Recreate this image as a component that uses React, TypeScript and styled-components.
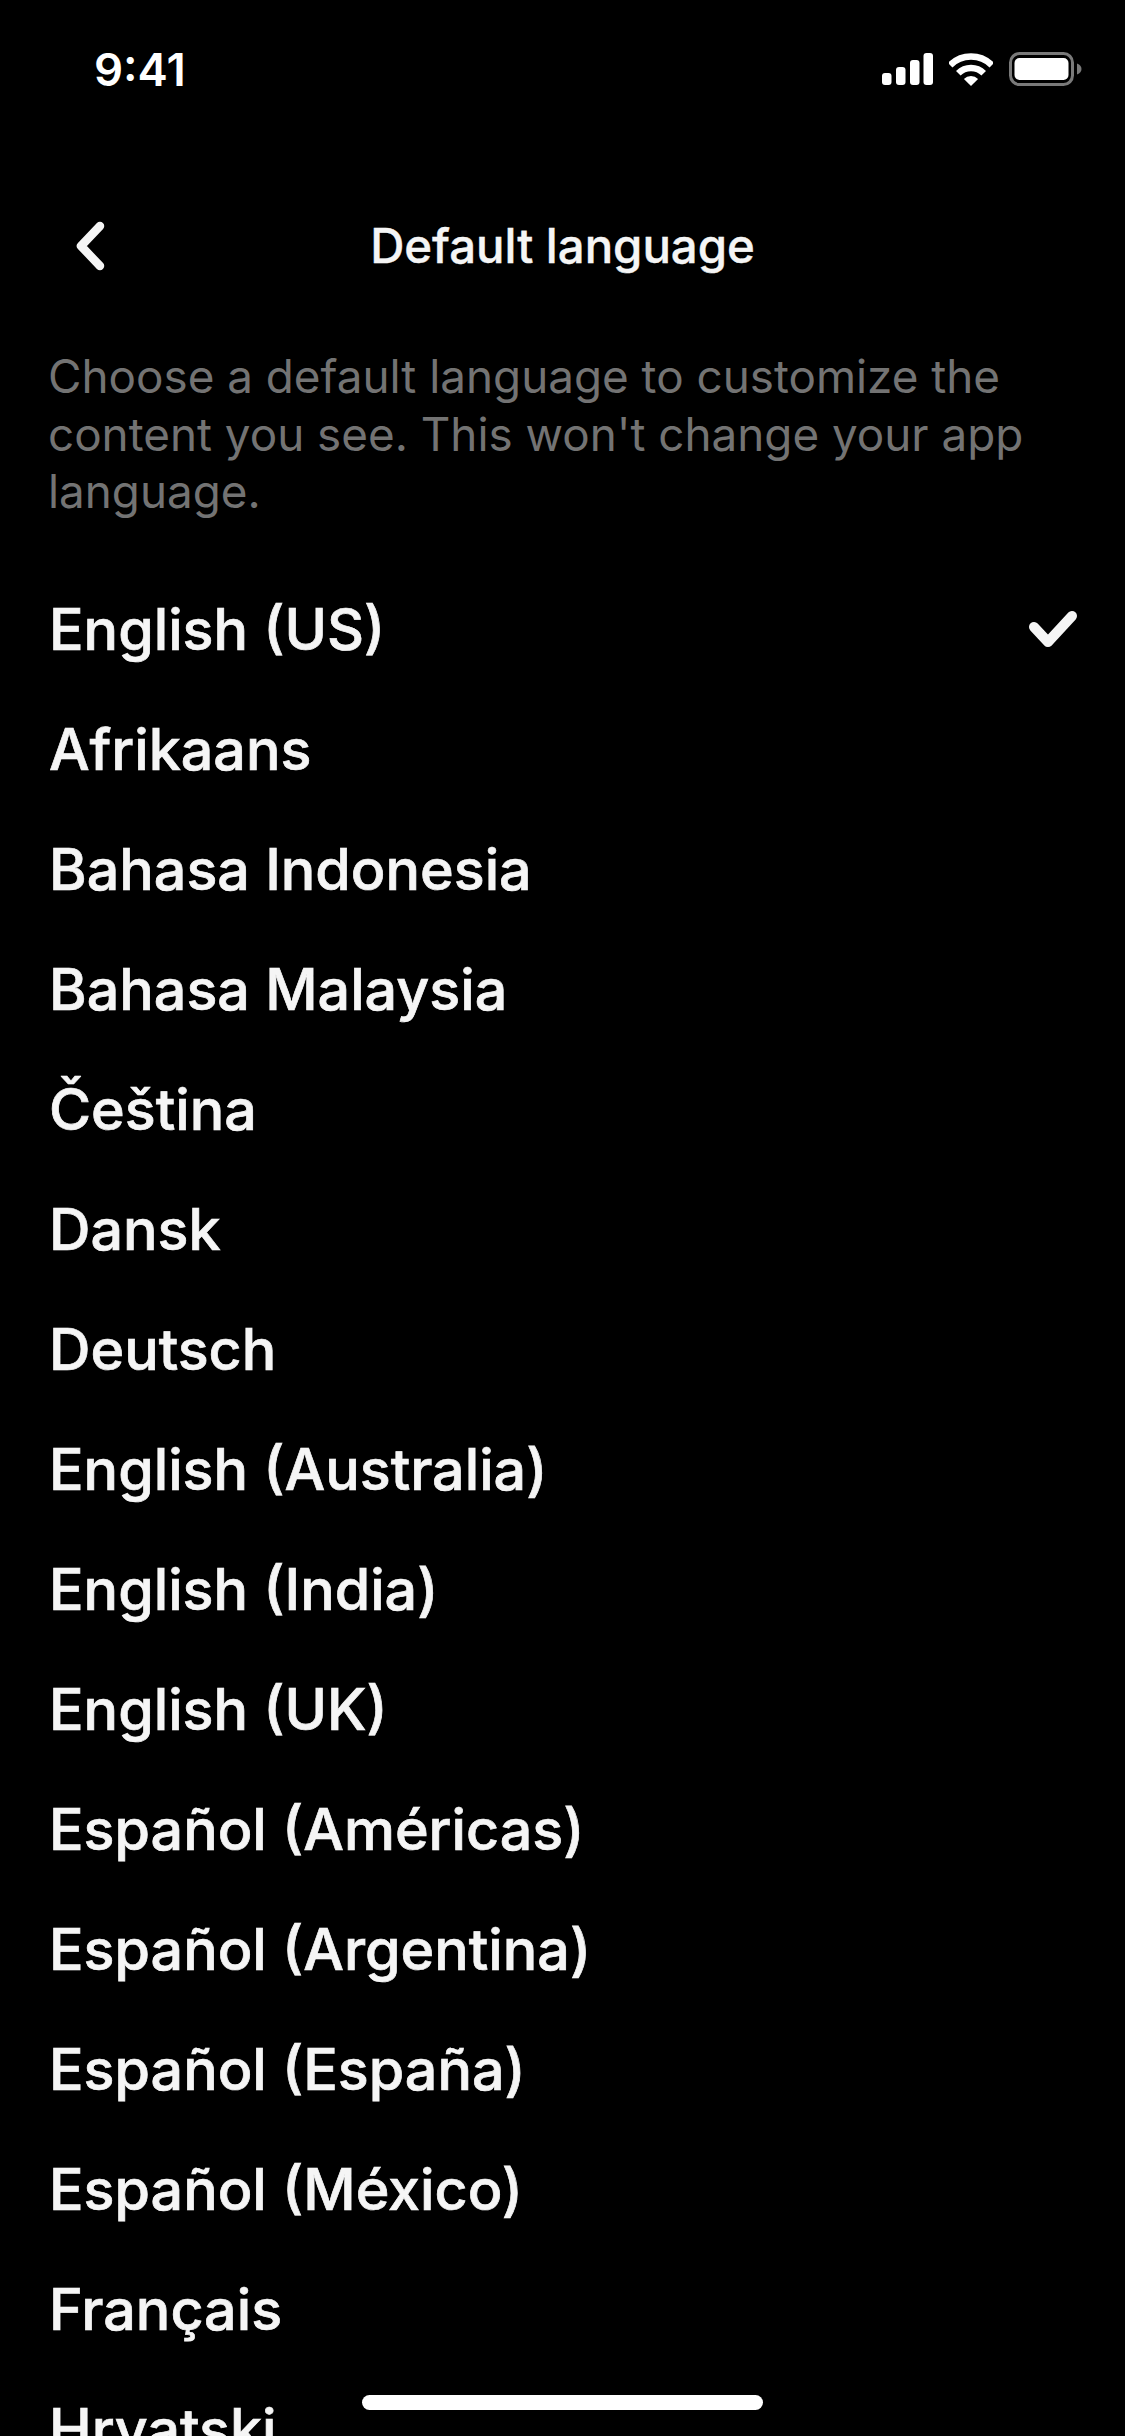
import React from "react";
import styled, { createGlobalStyle } from "styled-components";

const Global = createGlobalStyle`
  html, body { margin: 0; padding: 0; background: #000; }
  #root { width: 1125px; height: 2436px; }
`;

const Screen = styled.div`
  position: relative;
  width: 1125px;
  height: 2436px;
  overflow: hidden;
  background: #000;
  color: #f5f5f5;
  font-family: Inter, "Liberation Sans", sans-serif;
`;

const StatusBar = styled.div`
  display: flex;
  align-items: center;
  justify-content: space-between;
  height: 138px;
  padding: 0 43px 0 94px;
  box-sizing: border-box;
`;

const Clock = styled.span`
  font-size: 45.5px;
  font-weight: 600;
  color: #fff;
`;

const StatusIcons = styled.div`
  display: flex;
  align-items: center;
  gap: 16px;
`;

const Header = styled.div`
  display: flex;
  align-items: center;
  justify-content: center;
  position: relative;
  height: 110px;
  margin-top: 52px;
`;

const BackButton = styled.button`
  position: absolute;
  left: 74px;
  top: 30px;
  padding: 0;
  border: 0;
  background: none;
  display: flex;
`;

const Title = styled.h1`
  margin: 0;
  font-size: 47.3px;
  font-weight: 500;
  -webkit-text-stroke: 0.4px #f5f5f5;
  color: #f5f5f5;
`;

const Intro = styled.p`
  margin: 0;
  padding: 48px 48px 0;
  font-size: 45.8px;
  line-height: 57.5px;
  font-weight: 400;
  color: #737373;
`;

const List = styled.ul`
  list-style: none;
  margin: 0;
  padding: 48px 48px 0 49px;
`;

const Row = styled.li`
  display: flex;
  align-items: center;
  justify-content: space-between;
  height: 120px;
  font-size: 57.4px;
  font-weight: 500;
  -webkit-text-stroke: 0.7px #f5f5f5;
  color: #f5f5f5;
`;

const HomeBar = styled.div`
  position: absolute;
  left: 362px;
  bottom: 26px;
  width: 401px;
  height: 15px;
  border-radius: 8px;
  background: #fff;
`;

const languages = [
  "English (US)", "Afrikaans", "Bahasa Indonesia", "Bahasa Malaysia", "Čeština", "Dansk", "Deutsch",
  "English (Australia)", "English (India)", "English (UK)", "Español (Américas)", "Español (Argentina)",
  "Español (España)", "Español (México)", "Français", "Hrvatski",
];

const Signal = () => (
  <svg width="51" height="32" viewBox="0 0 51 32" fill="#fff">
    <rect x="0" y="20" width="9.5" height="12" rx="3" />
    <rect x="14" y="14" width="9.5" height="18" rx="3" />
    <rect x="28" y="7" width="9.5" height="25" rx="3" />
    <rect x="41.5" y="0" width="9.5" height="32" rx="3" />
  </svg>
);

const Wifi = () => (
  <svg width="44" height="33" viewBox="0 0 44 33" fill="none" stroke="#fff" strokeWidth="6.5">
    <path d="M1.14 12.14A29.5 29.5 0 0 1 42.86 12.14" />
    <path d="M9.3 20.3A18 18 0 0 1 34.7 20.3" />
    <path d="M22 33L14.9 25.9A10 10 0 0 1 29.1 25.9Z" fill="#fff" stroke="none" />
  </svg>
);

const Battery = () => (
  <svg width="73" height="34" viewBox="0 0 73 34">
    <rect x="1.5" y="1.5" width="62" height="31" rx="9" fill="none" stroke="#7a7a7a" strokeWidth="3" />
    <rect x="5.5" y="6" width="54" height="22" rx="5" fill="#fff" />
    <path d="M68 11.5C71 12.5 72.5 14.5 72.5 17C72.5 19.5 71 21.5 68 22.5Z" fill="#7a7a7a" />
  </svg>
);

const Chevron = () => (
  <svg width="32" height="52" viewBox="0 0 32 52" fill="none" stroke="#f5f5f5" strokeWidth="8.5" strokeLinecap="round" strokeLinejoin="round">
    <path d="M26 6L7 26L26 46" />
  </svg>
);

const Check = () => (
  <svg width="50" height="38" viewBox="0 0 50 38" fill="none" stroke="#f5f5f5" strokeWidth="10" strokeLinecap="round" strokeLinejoin="round">
    <path d="M7 17L21 32L45 6" />
  </svg>
);

export default function App() {
  return (
    <Screen>
      <Global />
      <StatusBar>
        <Clock>9:41</Clock>
        <StatusIcons>
          <Signal />
          <Wifi />
          <Battery />
        </StatusIcons>
      </StatusBar>
      <Header>
        <BackButton aria-label="Back"><Chevron /></BackButton>
        <Title>Default language</Title>
      </Header>
      <Intro>Choose a default language to customize the content you see. This won't change your app language.</Intro>
      <List>
        {languages.map((l, i) => (
          <Row key={l}>
            {l}
            {i === 0 && <Check />}
          </Row>
        ))}
      </List>
      <HomeBar />
    </Screen>
  );
}
